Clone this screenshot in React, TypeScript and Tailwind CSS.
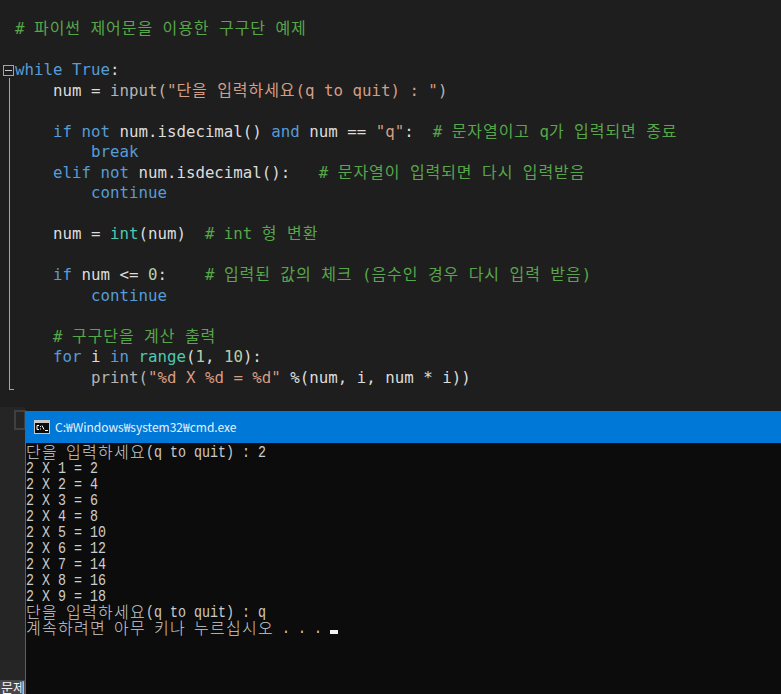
const C = { k: "text-[#569cd6]", w: "text-[#dcdcdc]", s: "text-[#d69d85]", c: "text-[#57a64a]", t: "text-[#4ec9b0]", n: "text-[#b5cea8]", p: "text-[#b4b4b4]" };
type Tok = [keyof typeof C, string];

function runs(text: string) {
  return text.split(/([\uAC00-\uD7A3]+)/).filter(Boolean);
}

function Code({ toks, indent = 0 }: { toks: Tok[]; indent?: number }) {
  return (
    <div className="h-[20.5px] leading-[20.5px] whitespace-pre" style={{ paddingLeft: indent * 9.5 }}>
      {toks.map(([c, text], i) => (
        <span key={i} className={C[c]}>
          {runs(text).map((r, j) =>
            /[\uAC00-\uD7A3]/.test(r) ? (
              <span key={j} className="font-['Noto_Sans_CJK_KR',sans-serif] text-[16px] tracking-[0.93px] leading-none">{r}</span>
            ) : (
              <span key={j}>{r}</span>
            )
          )}
        </span>
      ))}
    </div>
  );
}

function Term({ text }: { text: string }) {
  return (
    <div className="flex items-center h-4 leading-4 whitespace-pre">
      {runs(text).map((r, j) =>
        /[\uAC00-\uD7A3]/.test(r) ? (
          <span key={j} className="relative -top-px font-['Noto_Sans_CJK_KR',sans-serif] font-light text-[16px] tracking-[1.28px] leading-4">{r}</span>
        ) : (
          <span key={j} className="relative top-[2px] origin-[50%_75%] scale-y-[1.22]">{r}</span>
        )
      )}
    </div>
  );
}

const table = [1, 2, 3, 4, 5, 6, 7, 8, 9];

export default function App() {
  return (
    <div className="relative w-[781px] h-[694px] overflow-hidden bg-[#1e1e1e]">
      <div className="flex pt-[19px]">
        <div className="w-[15px] shrink-0 relative">
          <div className="absolute left-[3px] top-[46px] w-[11px] h-[11px] border border-[#a5a5a5] flex items-center justify-center">
            <div className="w-[7px] h-px bg-[#c8c8c8]" />
          </div>
          <div className="absolute left-[9px] top-[59px] w-px h-[311px] bg-[#a5a5a5]" />
          <div className="absolute left-[9px] top-[370px] w-[5px] h-px bg-[#a5a5a5]" />
        </div>
        <div className="font-['DejaVu_Sans_Mono',monospace] text-[15.77px]">
          <Code toks={[["c", "# 파이썬 제어문을 이용한 구구단 예제"]]} />
          <Code toks={[]} />
          <Code toks={[["k", "while True"], ["w", ":"]]} />
          <Code indent={4} toks={[["w", "num = "], ["p", "input("], ["s", "\"단을 입력하세요(q to quit) : \""], ["p", ")"]]} />
          <Code toks={[]} />
          <Code indent={4} toks={[["k", "if not "], ["w", "num.isdecimal() "], ["k", "and "], ["w", "num == "], ["s", "\"q\""], ["w", ":  "], ["c", "# 문자열이고 q가 입력되면 종료"]]} />
          <Code indent={8} toks={[["k", "break"]]} />
          <Code indent={4} toks={[["k", "elif not "], ["w", "num.isdecimal():   "], ["c", "# 문자열이 입력되면 다시 입력받음"]]} />
          <Code indent={8} toks={[["k", "continue"]]} />
          <Code toks={[]} />
          <Code indent={4} toks={[["w", "num = "], ["t", "int"], ["w", "(num)  "], ["c", "# int 형 변환"]]} />
          <Code toks={[]} />
          <Code indent={4} toks={[["k", "if "], ["w", "num <= "], ["n", "0"], ["w", ":    "], ["c", "# 입력된 값의 체크 (음수인 경우 다시 입력 받음)"]]} />
          <Code indent={8} toks={[["k", "continue"]]} />
          <Code toks={[]} />
          <Code indent={4} toks={[["c", "# 구구단을 계산 출력"]]} />
          <Code indent={4} toks={[["k", "for "], ["w", "i "], ["k", "in "], ["t", "range"], ["w", "("], ["n", "1"], ["w", ", "], ["n", "10"], ["w", "):"]]} />
          <Code indent={8} toks={[["p", "print("], ["s", "\"%d X %d = %d\""], ["w", " %(num, i, num * i))"]]} />
        </div>
      </div>

      <div className="absolute left-0 top-[407px] w-[25px] h-[287px] bg-[#252526]" />
      <div className="absolute left-[14px] top-[410px] w-[12px] h-[20px] border-2 border-[#3f3f40]" />
      <div className="absolute left-0 top-[680px] w-[25px] h-[14px] bg-[#46464a] overflow-hidden whitespace-pre pl-px text-[13px] leading-[14px] text-[#f1f1f1] font-['Noto_Sans_CJK_KR',sans-serif]">문제</div>

      <div className="absolute left-[25px] top-[411px] w-[756px] h-[283px] border-l border-[#0078d7] flex flex-col bg-[#0c0c0c]">
        <div className="h-8 shrink-0 bg-[#0078d7] flex items-center pl-2 gap-[5px]">
          <svg width="16" height="14" viewBox="0 0 16 14" className="shrink-0">
            <rect width="16" height="14" fill="#c8c8c8" />
            <rect x="1" y="3" width="14" height="10" fill="#0c0c0c" />
            <path d="M5 5.5H3V9.5H5M6.5 6V7M6.5 8.5V9.5M8 5.5L10 9.5M11 10.5H14" stroke="#ffffff" strokeWidth="1" fill="none" />
          </svg>
          <span className="text-[12px] text-[#e6f1fb] font-['Noto_Sans_CJK_KR','Noto_Sans',sans-serif] whitespace-pre">C:₩Windows₩system32₩cmd.exe</span>
        </div>
        <div className="flex-1 font-['Liberation_Mono',monospace] text-[13.33px] text-[#cccccc] pt-[1px]">
          <Term text="단을 입력하세요(q to quit) : 2" />
          {table.map((i) => (
            <Term key={i} text={`2 X ${i} = ${2 * i}`} />
          ))}
          <Term text="단을 입력하세요(q to quit) : q" />
          <div className="flex items-end">
            <Term text="계속하려면 아무 키나 누르십시오 . . . " />
            <div className="w-2 h-1 mb-[2px] bg-[#f2f2f2]" />
          </div>
        </div>
      </div>
    </div>
  );
}
